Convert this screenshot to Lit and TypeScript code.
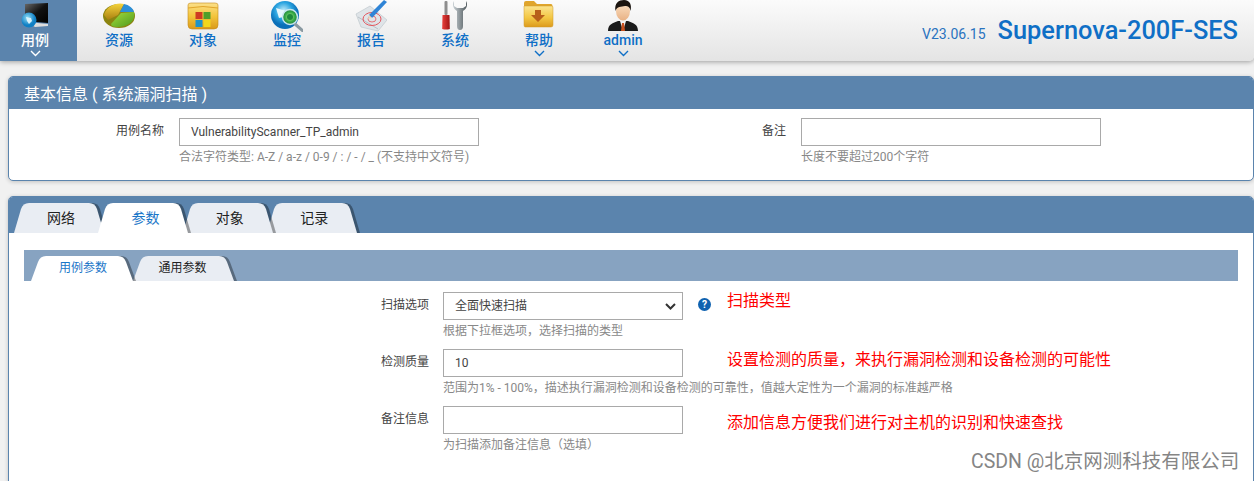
import { LitElement, html, css, svg } from "lit";
import { customElement } from "lit/decorators.js";

const icons: Record<string, any> = {
  case: svg`<defs><linearGradient id="m1" x1="0" y1="0" x2="1" y2="1"><stop offset="0" stop-color="#6a6a6a"/><stop offset=".5" stop-color="#111"/><stop offset="1" stop-color="#000"/></linearGradient><radialGradient id="g1" cx=".4" cy=".35"><stop offset="0" stop-color="#8fdcf5"/><stop offset="1" stop-color="#0f7fc4"/></radialGradient></defs>
    <path d="M6 4 L29 3 V23 L6 21Z" fill="url(#m1)"/><path d="M8 22 L29 24 V26 L16 27Z" fill="#ddd"/><circle cx="10" cy="20" r="7.500" fill="url(#g1)"/><path d="M7 17l5 1 1 3-3 3-2-3z" fill="#d9f2fb"/>`,
  res: svg`<defs><linearGradient id="y1" x1="0" y1="0" x2="0" y2="1"><stop offset="0" stop-color="#f5d33c"/><stop offset="1" stop-color="#a87f10"/></linearGradient><linearGradient id="gr" x1="0" y1="0" x2="1" y2="1"><stop offset="0" stop-color="#a5dc3c"/><stop offset="1" stop-color="#4d9a1e"/></linearGradient></defs>
    <ellipse cx="16" cy="16" rx="16" ry="12" fill="#8c8410"/><path d="M1 15 C3 6 14 2 21 4 L15 15 L5 20Z" fill="url(#y1)"/><path d="M21 4 C26 5 30 8 31 12 L17 12Z" fill="#2c8fd8"/><path d="M31 12 C33 20 26 27 14 27 C10 27 8 26 8 24 L18 13Z" fill="url(#gr)"/>`,
  obj: svg`<defs><linearGradient id="f1" x1="0" y1="0" x2="0" y2="1"><stop offset="0" stop-color="#fbe08a"/><stop offset=".5" stop-color="#f4c53c"/><stop offset="1" stop-color="#d99a1a"/></linearGradient></defs>
    <path d="M1 5 Q1 3 4 3 H28 Q31 3 31 5 V25 Q31 29 27 29 H5 Q1 29 1 25Z" fill="url(#f1)" stroke="#c48a1c" stroke-width=".6"/><path d="M1 8 Q16 5 31 8" stroke="#e0a52c" fill="none"/><rect x="8.500" y="12" width="7" height="7" fill="#cf3a22"/><rect x="16.500" y="12" width="7" height="7" fill="#4e9e2a"/><rect x="8.500" y="20" width="7" height="7" fill="#1d93c9"/><rect x="16.500" y="20" width="7" height="7" fill="#f1d81c"/>`,
  mon: svg`<defs><radialGradient id="g2" cx=".45" cy=".35"><stop offset="0" stop-color="#c9eefa"/><stop offset=".6" stop-color="#2aa4e0"/><stop offset="1" stop-color="#0b6fb8"/></radialGradient><radialGradient id="g3"><stop offset="0" stop-color="#d4f0a8"/><stop offset=".6" stop-color="#3bb04a"/><stop offset="1" stop-color="#1d7d3a"/></radialGradient></defs>
    <circle cx="14" cy="15" r="14" fill="url(#g2)"/><path d="M5 8 l10 3 l-3 6 l-4 1z" fill="#e6f7fd"/><path d="M24 24 L32 31" stroke="#8a9aa2" stroke-width="3" stroke-linecap="round"/><circle cx="19" cy="17" r="7.500" fill="url(#g3)" stroke="#c7e7ef" stroke-width="1.500"/><circle cx="19" cy="17" r="3" fill="#1e8a3c"/>`,
  rep: svg`<path d="M1 14 L15 6 L32 20 L23 31 L6 27Z" fill="#dfe4e8" stroke="#b9c2c8" stroke-width=".6"/><path d="M3 17 L23 29" stroke="#b9c2c8"/><ellipse cx="17" cy="19" rx="9" ry="6.500" fill="none" stroke="#e4545c" stroke-width="1"/><ellipse cx="17" cy="19" rx="4" ry="3" fill="none" stroke="#e4545c" stroke-width=".8"/><path d="M14 15 L29 0 L32 2 L17 18Z" fill="#2f84d6"/><path d="M14 15 L17 18 L13 19Z" fill="#e8d7bd"/>`,
  sys: svg`<defs><linearGradient id="r1" x1="0" x2="1"><stop offset="0" stop-color="#e8403c"/><stop offset="1" stop-color="#a01414"/></linearGradient><linearGradient id="s1" x1="0" x2="1"><stop offset="0" stop-color="#c9d0d4"/><stop offset=".5" stop-color="#8b9498"/><stop offset="1" stop-color="#4f585c"/></linearGradient></defs>
    <rect x="5.500" y="1" width="3" height="14" rx="1" fill="#8e8e8e"/><path d="M3.500 15 H10.500 L10.800 29 Q7 30 3.200 29Z" fill="url(#r1)"/><path d="M15 1 C13 4 14 9 18 11 V26 Q18 30 21 30 Q24 30 24 26 V11 C28 9 29 4 27 1 V6 L24 8 H18 L15 6Z" fill="url(#s1)"/>`,
  help: svg`<defs><linearGradient id="f2" x1="0" y1="0" x2="0" y2="1"><stop offset="0" stop-color="#fbe48e"/><stop offset=".55" stop-color="#f3c744"/><stop offset="1" stop-color="#dc9a1c"/></linearGradient></defs>
    <path d="M1 3 Q1 1 3 1 H11 L14 4 H28 Q29.500 4 29.500 6 V9 H1Z" fill="#e0a52c"/><path d="M1 6 H29 Q30 6 30 8 V25 Q30 27 28 27 H2 Q1 27 1 25Z" fill="url(#f2)" stroke="#cf9a2c" stroke-width=".5"/><path d="M12 10 H18 V15 H22 L15 22 L8 15 H12Z" fill="#b8601a"/>`,
  user: svg`<defs><linearGradient id="sk" x1="0" y1="0" x2="0" y2="1"><stop offset="0" stop-color="#fde4c8"/><stop offset="1" stop-color="#e8b184"/></linearGradient></defs>
    <path d="M1 31 C1 24 6 23 11 21 H21 C26 23 31 24 31 31Z" fill="#1a1a1a"/><path d="M13 21 L16 31 L19 21Z" fill="#f2f2f2"/><path d="M15 23 H17 L18 31 H14Z" fill="#c9501e"/><ellipse cx="16" cy="11" rx="7" ry="9.500" fill="url(#sk)"/><path d="M8.500 11 C7 3 12 0 17 0 C23 0 25 5 23.500 11 C23 7 21 6 18 6 C14 7 10 6 8.500 11Z" fill="#1c1510"/>`,
};

const nav = [
  ["用例", "case", true],
  ["资源", "res", false],
  ["对象", "obj", false],
  ["监控", "mon", false],
  ["报告", "rep", false],
  ["系统", "sys", false],
  ["帮助", "help", true],
  ["admin", "user", true],
] as const;

function tabShape(w: number, h: number) {
  const d = `M0 ${h} L7 6 Q9 0 15 0 H${w - 17} Q${w - 11} 0 ${w - 9} 6 L${w - 2} ${h} Z`;
  return svg`<svg class="shape" viewBox="0 0 ${w} ${h}" width=${w} height=${h}><path class="shadow" d=${d} transform="translate(3 0)"/><path class="fill" d=${d}/></svg>`;
}

@customElement("app-root")
export class AppRoot extends LitElement {
  static styles = css`
    :host {
      display: block;
      width: 1254px;
      height: 481px;
      overflow: hidden;
      position: relative;
      background: #f1f1f1;
      font-family: Roboto, "Noto Sans CJK SC", sans-serif;
      font-size: 12px;
      color: #333;
    }
    .top {
      height: 61px;
      display: flex;
      background: linear-gradient(#fbfbfb, #e4e4e4);
      border-bottom-right-radius: 5px;
      box-shadow: 0 1px 5px rgba(0, 0, 0, 0.35);
      position: relative;
    }
    .nav { display: flex; }
    .item {
      width: 84px;
      height: 61px;
      display: flex;
      flex-direction: column;
      align-items: center;
      color: #0f6fc6;
      font-size: 14px;
      font-weight: 500;
    }
    .item svg.ic { width: 32px; height: 32px; flex: none; margin-bottom: -1px; }
    .item .lab { height: 17px; line-height: 18px; }
    .item.active { width: 77px; padding-right: 7px; box-sizing: border-box; background: #5b84ad; color: #fff; }
    .chev { width: 11px; height: 7px; margin-top: 2px; fill: none; stroke: currentColor; stroke-width: 1.4; }
    .brand { margin-left: auto; display: flex; align-items: baseline; padding: 15px 16px 0 0; color: #0f6fc6; }
    .ver { font-size: 14px; margin-right: 12px; color: #2a73bf; }
    .name { font-size: 25.400px; line-height: 30px; font-weight: 500; }
    .card {
      margin: 15px 0 0 8px;
      border: 1px solid #5b84ad;
      border-radius: 5px;
      background: #fff;
      box-shadow: 0 1px 4px rgba(0, 0, 0, 0.2);
    }
    .head {
      height: 32px;
      line-height: 35px;
      background: #5b84ad;
      color: #fff;
      font-size: 16px;
      padding-left: 15px;
      border-radius: 4px 4px 0 0;
    }
    .row1 { display: flex; height: 71px; padding-top: 9px; box-sizing: border-box; }
    .f1 { display: grid; grid-template-columns: 155px 300px; column-gap: 15px; width: 752px; align-content: start; }
    .f2 { display: grid; grid-template-columns: 25px 300px; column-gap: 15px; align-content: start; }
    .lab1 { text-align: right; line-height: 26px; color: #444; }
    .input {
      box-sizing: border-box;
      border: 1px solid #a9a9a9;
      background: #fff;
      height: 28px;
      line-height: 26px;
      padding-left: 11px;
      color: #444;
      font-size: 12px;
    }
    .hint { grid-column: 2; color: #888; line-height: 17px; margin-top: 3px; white-space: nowrap; font-size: 12px; }
    .card2 { height: 320px; margin-top: 15px; }
    .tabbar {
      height: 36px;
      background: #5b84ad;
      border-radius: 4px 4px 0 0;
      display: flex;
      align-items: flex-end;
      padding-left: 5px;
    }
    .tab {
      position: relative;
      width: 92px;
      height: 30px;
      box-sizing: border-box;
      padding-left: 2px;
      line-height: 30px;
      text-align: center;
      font-size: 14px;
      color: #222;
      margin-right: -7.600px;
    }
    .tab span, .sub span { position: relative; }
    .tab.on, .sub.on { color: #1a76c8; }
    .shape { position: absolute; left: 0; top: 0; overflow: visible; }
    .shape .fill { fill: #e9edf3; }
    .on .shape .fill { fill: #fff; }
    .shape .shadow { fill: rgba(0, 0, 0, 0.35); }
    .body { padding: 17px 15px 0; }
    .subbar {
      height: 31px;
      background: #87a3c1;
      display: flex;
      align-items: flex-end;
      padding-left: 7px;
    }
    .sub { position: relative; height: 25px; box-sizing: border-box; line-height: 25px; text-align: center; font-size: 12px; color: #222; margin-right: -2px; }
    .sub.second { padding-right: 4px; }
    .form {
      display: grid;
      grid-template-columns: 419px 240px 44px auto;
      padding-top: 11px;
    }
    .form .lab1 { padding-right: 14px; line-height: 26px; }
    .form .hint { grid-column: 2 / 5; height: 16px; line-height: 16px; margin: 3px 0 10px; font-size: 12px; }
    .sel {
      display: flex;
      justify-content: space-between;
      align-items: center;
      padding-right: 6px;
    }
    .sel svg { width: 11px; height: 7px; fill: none; stroke: #333; stroke-width: 2; }
    .q { display: flex; align-items: center; padding: 0 0 3px 15px; height: 25px; }
    .q svg { width: 13px; height: 13px; }
    .note { color: #f00; font-size: 16px; line-height: 22px; height: 22px; white-space: nowrap; align-self: start; }
    .note.a { margin-top: -2px; }
    .note.b { margin-top: 0; }
    .note.c { margin-top: 6px; }
    .mark { position: absolute; left: 971px; top: 450px; font-size: 19.500px; line-height: 24px; color: #858585; }
  `;

  render() {
    return html`
      <div class="top">
        <div class="nav">
          ${nav.map(
            ([t, ic, ch], i) => html`<div class="item ${i === 0 ? "active" : ""}">
              <svg class="ic" viewBox="0 0 32 32">${icons[ic]}</svg>
              <div class="lab">${t}</div>
              ${ch ? html`<svg class="chev" viewBox="0 0 11 7"><path d="M1 1l4.500 4.500L10 1" /></svg>` : ""}
            </div>`
          )}
        </div>
        <div class="brand"><span class="ver">V23.06.15</span><span class="name">Supernova-200F-SES</span></div>
      </div>

      <div class="card">
        <div class="head">基本信息 ( 系统漏洞扫描 )</div>
        <div class="row1">
          <div class="f1">
            <div class="lab1">用例名称</div>
            <div class="input">VulnerabilityScanner_TP_admin</div>
            <div class="hint">合法字符类型: A-Z / a-z / 0-9 / : / - / _ (不支持中文符号)</div>
          </div>
          <div class="f2">
            <div class="lab1">备注</div>
            <div class="input"></div>
            <div class="hint">长度不要超过200个字符</div>
          </div>
        </div>
      </div>

      <div class="card card2">
        <div class="tabbar">
          ${["网络", "参数", "对象", "记录"].map((t, i) => {
            const z = i === 1 ? 5 : 4 - i;
            return html`<div class="tab ${i === 1 ? "on" : ""}" style="z-index:${z}">
              ${tabShape(92, 30)}<span>${t}</span>
            </div>`;
          })}
        </div>
        <div class="body">
          <div class="subbar">
            ${[["用例参数", 104], ["通用参数", 103]].map(
              ([t, w], i) => html`<div class="sub ${i === 0 ? "on" : "second"}" style="width:${w}px;z-index:${2 - i}">
                ${tabShape(w as number, 25)}<span>${t}</span>
              </div>`
            )}
          </div>
          <div class="form">
            <div class="lab1">扫描选项</div>
            <div class="input sel">全面快速扫描<svg viewBox="0 0 11 7"><path d="M1 1l4.500 4.500L10 1" /></svg></div>
            <div class="q"><svg viewBox="0 0 14 14"><circle cx="7" cy="7" r="7" fill="#0f62b0"/><text x="7" y="11" text-anchor="middle" font-size="11" font-weight="700" fill="#fff" font-family="Roboto">?</text></svg></div>
            <div class="note a">扫描类型</div>
            <div></div><div class="hint">根据下拉框选项，选择扫描的类型</div>

            <div class="lab1">检测质量</div>
            <div class="input">10</div>
            <div></div>
            <div class="note b">设置检测的质量，来执行漏洞检测和设备检测的可能性</div>
            <div></div><div class="hint">范围为1% - 100%，描述执行漏洞检测和设备检测的可靠性，值越大定性为一个漏洞的标准越严格</div>

            <div class="lab1">备注信息</div>
            <div class="input"></div>
            <div></div>
            <div class="note c">添加信息方便我们进行对主机的识别和快速查找</div>
            <div></div><div class="hint">为扫描添加备注信息（选填）</div>
          </div>
        </div>
      </div>
      <div class="mark">CSDN @北京网测科技有限公司</div>
    `;
  }
}
